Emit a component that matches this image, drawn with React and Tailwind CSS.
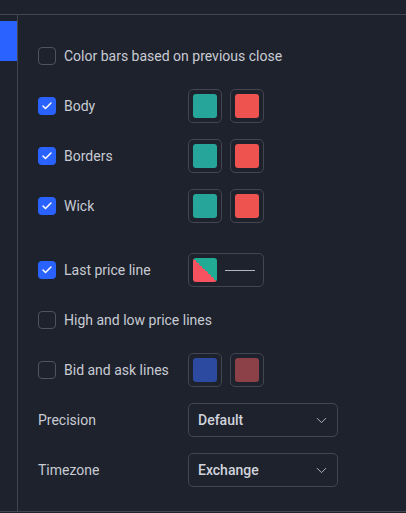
import { Check, ChevronDown } from 'lucide-react';

function Checkbox({ checked }) {
  return checked ? (
    <span className="flex items-center justify-center w-[18px] h-[18px] rounded-[4px] bg-[#2962ff] shrink-0">
      <Check size={12} strokeWidth={3} className="text-white" />
    </span>
  ) : (
    <span className="w-[18px] h-[18px] rounded-[4px] border border-[#50535e] shrink-0" />
  );
}

function Swatch({ color }) {
  return (
    <button className="w-[34px] h-[34px] p-[4px] rounded-[5px] border border-[#434651] flex items-center justify-center">
      <span className="block w-[24px] h-[24px] rounded-[3px]" style={{ background: color }} />
    </button>
  );
}

function Row({ label, checked, hasBox = true, children, className = '' }) {
  return (
    <div className={`flex items-center h-[34px] ${className}`}>
      <div className="w-[150px] flex items-center gap-2">
        {hasBox && <Checkbox checked={checked} />}
        <span className="text-[14px] text-[#c8cbd3] whitespace-nowrap">{label}</span>
      </div>
      {children && <div className="flex items-center gap-2">{children}</div>}
    </div>
  );
}

function Select({ value }) {
  return (
    <button className="w-[150px] h-[34px] rounded-[5px] border border-[#434651] flex items-center justify-between pl-[9px] pr-[7px]">
      <span className="text-[14px] font-medium text-[#d1d4dc]">{value}</span>
      <ChevronDown size={17} strokeWidth={1.4} className="text-[#b2b5be]" />
    </button>
  );
}

export default function App() {
  return (
    <div
      className="w-[406px] h-[513px] bg-[#1e222d] flex flex-col overflow-hidden"
      style={{ fontFamily: 'Roboto, "Liberation Sans", sans-serif' }}
    >
      <div className="h-[15px] border-b border-[#434651] shrink-0" />
      <div className="flex h-[496px] shrink-0">
        <aside className="w-[18px] border-r border-[#434651] shrink-0">
          <div className="mt-[6px] h-[40px] bg-[#2962ff]" />
        </aside>
        <main className="flex-1 pl-[20px] pt-[24px] flex flex-col gap-4">
          <Row label="Color bars based on previous close" checked={false} />
          <Row label="Body" checked>
            <Swatch color="#26a69a" />
            <Swatch color="#ef5350" />
          </Row>
          <Row label="Borders" checked>
            <Swatch color="#26a69a" />
            <Swatch color="#ef5350" />
          </Row>
          <Row label="Wick" checked>
            <Swatch color="#26a69a" />
            <Swatch color="#ef5350" />
          </Row>
          <Row label="Last price line" checked className="mt-[14px]">
            <button className="w-[76px] h-[34px] p-[4px] rounded-[5px] border border-[#434651] flex items-center gap-2">
              <span
                className="block w-[24px] h-[24px] rounded-[3px]"
                style={{ background: 'linear-gradient(to top right, #f7525f 50%, #22ab94 50%)' }}
              />
              <span className="block w-[30px] h-px bg-[#b2b5be]" />
            </button>
          </Row>
          <Row label="High and low price lines" checked={false} />
          <Row label="Bid and ask lines" checked={false}>
            <Swatch color="#2b4aa0" />
            <Swatch color="#8c4047" />
          </Row>
          <Row label="Precision" hasBox={false}>
            <Select value="Default" />
          </Row>
          <Row label="Timezone" hasBox={false}>
            <Select value="Exchange" />
          </Row>
        </main>
      </div>
      <div className="border-t border-[#434651]" />
    </div>
  );
}
